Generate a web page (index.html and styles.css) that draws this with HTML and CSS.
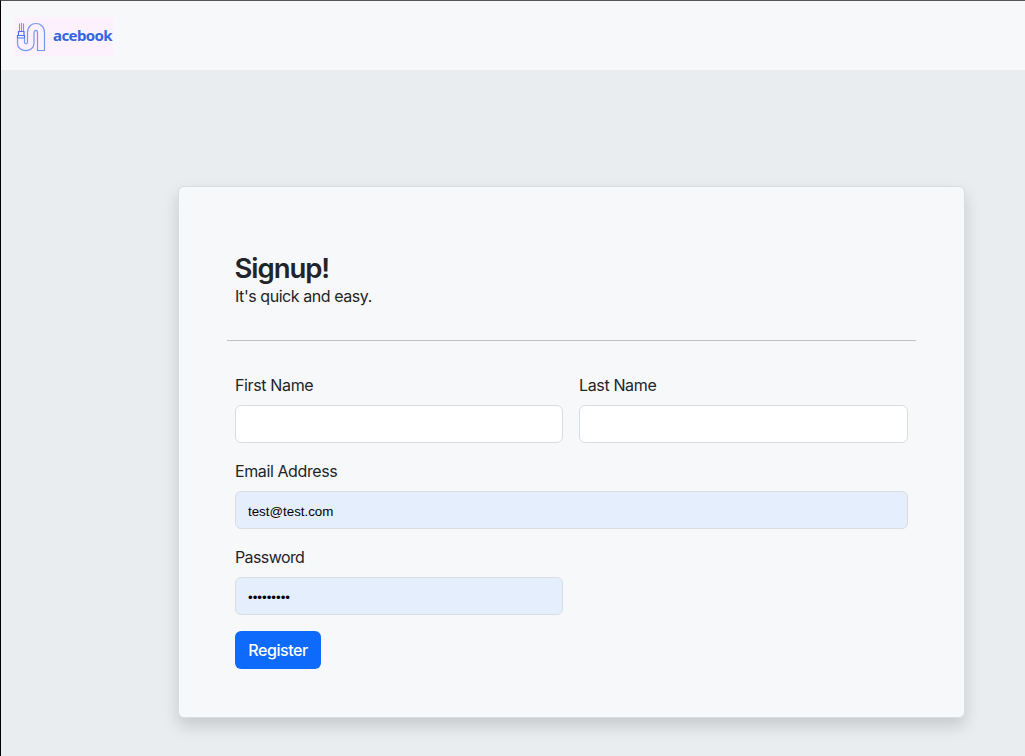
FILE: index.html
```html
<!DOCTYPE html>
<html lang="en">
<head>
<meta charset="utf-8">
<title>acebook</title>
<link rel="stylesheet" href="styles.css">
</head>
<body>
<nav class="navbar">
  <a class="brand" href="#">
    <svg class="brand-icon" width="32" height="32" viewBox="0 0 32 32" fill="none" stroke="#7299f3" stroke-width="1.200">
      <path d="M4.500 1.500v8M6.500 1v8.500M8.500 1.500v8" stroke-width="1.100"/>
      <path d="M3.500 9.500h5.500v4h-5.500zM2.500 13.500h7v2.500h-7z" stroke="#4478ea"/>
      <path d="M2.500 16v5.500c0 9.500 16.500 9.500 16.500 0V11c0-3.500 3.500-3.500 3.500 0v17.500h7V10.500c0-12-17-12-17 0V20c0 2.500-3 2.500-3 0v-4"/>
    </svg>
    <span class="brand-name">acebook</span>
  </a>
</nav>
<main class="card">
  <header class="card-heading">
    <h1 class="title">Signup!</h1>
    <p class="subtitle">It's quick and easy.</p>
  </header>
  <hr class="divider">
  <form class="form">
    <div class="field"><label class="label first" for="first">First Name</label><input class="control" id="first" type="text"></div>
    <div class="field"><label class="label last" for="last">Last Name</label><input class="control" id="last" type="text"></div>
    <div class="field wide"><label class="label email" for="email">Email Address</label><input class="control filled" id="email" type="text" value="test@test.com"></div>
    <div class="field"><label class="label password" for="password">Password</label><input class="control filled" id="password" type="password" value="password1"></div>
    <div class="actions"><button class="button" type="button">Register</button></div>
  </form>
</main>
</body>
</html>
```
FILE: styles.css
```css
* { box-sizing: border-box; }
body {
  margin: 0;
  height: 756px;
  overflow: hidden;
  background: #e9edf0;
  border-left: 1px solid #000;
  border-top: 1px solid #55565b;
  color: #212529;
  font: 16px/24px Inter, "Liberation Sans", sans-serif;
}
.navbar {
  height: 69px;
  padding: 16px 13px;
  background: #f7f8fa;
}
.brand {
  display: flex;
  align-items: center;
  width: 99px;
  height: 39px;
  padding-left: 1px;
  background: #fdf1fe;
  color: #3267df;
  text-decoration: none;
}
.brand-icon { flex: none; margin-top: 3px; }
.brand-name {
  margin: -3px 0 0 6px;
  font: 700 15px/20px "Noto Sans", sans-serif;
  letter-spacing: -0.6px;
}
.card {
  width: 787px;
  height: 532px;
  margin: 116px 0 0 177px;
  padding: 64px 48px 0;
  background: #f7f8fa;
  border: 1px solid #d9dde0;
  border-radius: 6px;
  box-shadow: 0 8px 16px rgba(0, 0, 0, .15);
}
.card-heading { padding: 0 8px; }
.title {
  margin: 0 0 0 -0.5px;
  font-size: 27.5px;
  line-height: 34px;
  font-weight: 600;
  letter-spacing: -1.05px;
}
.subtitle { margin: -1px 0 0; letter-spacing: -0.44px; }
.divider {
  height: 1px;
  margin: 32px 0;
  border: 0;
  background: #bfc2c5;
}
.form {
  display: grid;
  grid-template-columns: 328px 329px;
  column-gap: 16px;
  row-gap: 16px;
  padding: 0 8px;
}
.wide, .actions { grid-column: 1 / -1; }
.label { display: table; margin-bottom: 8px; letter-spacing: -0.4px; }
.first, .last { letter-spacing: -0.36px; }
.password { letter-spacing: -0.6px; }
.control {
  display: block;
  width: 100%;
  height: 38px;
  padding: 3px 12px 0;
  border: 1px solid #d9dde1;
  border-radius: 6px;
  background: #fff;
  color: #000;
  font: 13.333px "Liberation Sans", Arial, sans-serif;
}
.filled { background: #e5eefd; }
.button {
  display: block;
  width: 86px;
  height: 38px;
  padding: 0;
  border: 0;
  border-radius: 6px;
  background: #0d6afb;
  color: #fff;
  font: 500 16px/24px Inter, "Liberation Sans", sans-serif;
  letter-spacing: -0.45px;
}
```
